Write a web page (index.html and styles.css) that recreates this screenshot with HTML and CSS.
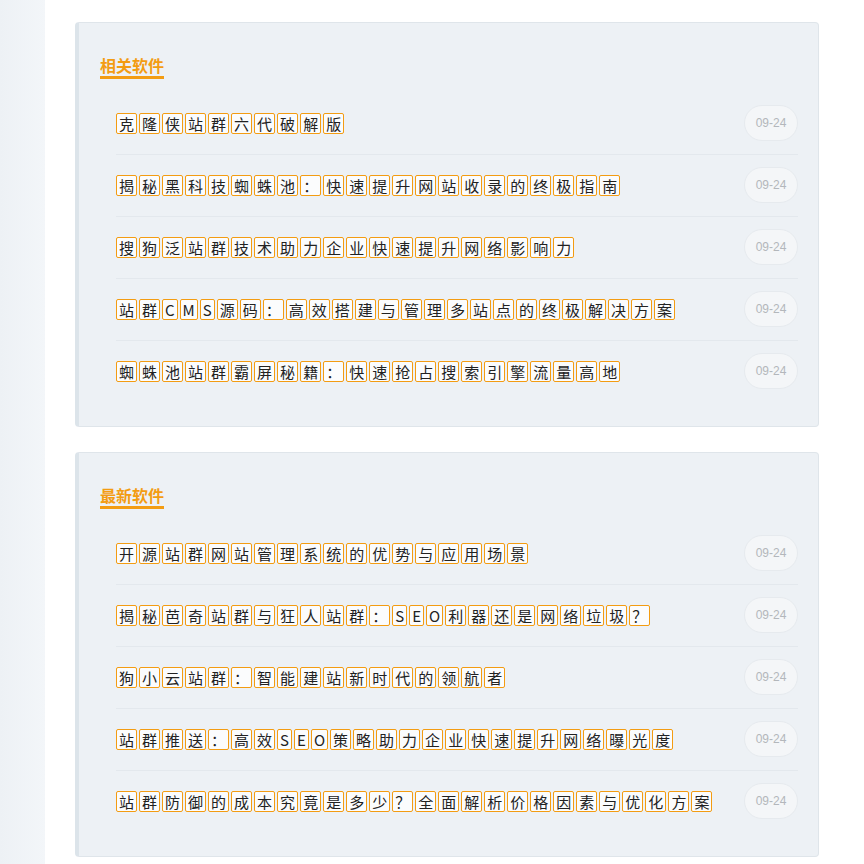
FILE: index.html
```html
<!DOCTYPE html>
<html lang="zh-CN">
<head>
    <meta charset="UTF-8">
    <title>软件列表</title>
    <link rel="stylesheet" href="styles.css">
</head>
<body>
    <div class="layout">
        <div class="sidebar"></div>
        <div class="main">
            <div class="card">
                <h3 class="card-title">相关软件</h3>
                <ul class="soft-list">
                    <li><a class="name" href="#">克隆侠站群六代破解版</a><span class="date">09-24</span></li>
                    <li><a class="name" href="#">揭秘黑科技蜘蛛池：快速提升网站收录的终极指南</a><span class="date">09-24</span></li>
                    <li><a class="name" href="#">搜狗泛站群技术助力企业快速提升网络影响力</a><span class="date">09-24</span></li>
                    <li><a class="name" href="#">站群CMS源码：高效搭建与管理多站点的终极解决方案</a><span class="date">09-24</span></li>
                    <li><a class="name" href="#">蜘蛛池站群霸屏秘籍：快速抢占搜索引擎流量高地</a><span class="date">09-24</span></li>
                </ul>
            </div>

            <div class="card">
                <h3 class="card-title">最新软件</h3>
                <ul class="soft-list">
                    <li><a class="name" href="#">开源站群网站管理系统的优势与应用场景</a><span class="date">09-24</span></li>
                    <li><a class="name" href="#">揭秘芭奇站群与狂人站群：SEO利器还是网络垃圾？</a><span class="date">09-24</span></li>
                    <li><a class="name" href="#">狗小云站群：智能建站新时代的领航者</a><span class="date">09-24</span></li>
                    <li><a class="name" href="#">站群推送：高效SEO策略助力企业快速提升网络曝光度</a><span class="date">09-24</span></li>
                    <li><a class="name" href="#">站群防御的成本究竟是多少？全面解析价格因素与优化方案</a><span class="date">09-24</span></li>
                </ul>
            </div>
        </div>
    </div>

    <script>
        // 每个字单独包一层
        document.querySelectorAll('.soft-list .name').forEach(function (link) {
            const text = link.textContent;
            link.innerHTML = '';
            Array.from(text).forEach(function (ch) {
                const span = document.createElement('span');
                span.className = 'ch';
                span.textContent = ch;
                link.appendChild(span);
            });
        });
    </script>
</body>
</html>
```

FILE: styles.css
```css
body {
    margin: 0;
    font-family: "Noto Sans CJK SC", "Noto Sans", sans-serif;
    background-color: #ffffff;
    color: #333;
}
.layout {
    display: flex;
    min-height: 864px;
}
.sidebar {
    width: 45px;
    flex-shrink: 0;
    background: linear-gradient(to right, #edf1f5, #f3f6f9);
}
.main {
    flex: 1;
    padding: 22px 45px 0 30px;
}
.card {
    background-color: #edf1f5;
    border: 1px solid #dfe5ea;
    border-left: 4px solid #dce4ea;
    border-radius: 4px;
    padding: 30px 20px 24px 21px;
    margin-bottom: 25px;
}
.card-title {
    display: inline-block;
    margin: 0;
    font-size: 16px;
    line-height: 22px;
    font-weight: bold;
    color: #f39c12;
    border-bottom: 3px solid #f39c12;
}
.soft-list {
    list-style: none;
    margin: 14px 0 0 16px;
    padding: 0;
}
.soft-list li {
    display: flex;
    align-items: center;
    justify-content: space-between;
    padding: 12px 0 13px;
    border-bottom: 1px solid #e3e8ed;
}
.soft-list li:last-child {
    border-bottom: none;
}
.name {
    text-decoration: none;
    color: #222;
    display: flex;
    flex-wrap: wrap;
    gap: 2px;
}
.ch {
    display: inline-block;
    font-size: 15px;
    line-height: 19px;
    padding: 0 2px;
    border: 1px solid #f39c12;
    border-radius: 2px;
    background-color: #fbfcfd;
}
.date {
    width: 52px;
    height: 34px;
    line-height: 34px;
    text-align: center;
    border: 1px solid #e6eaee;
    border-radius: 18px;
    background-color: #f4f6f8;
    color: #b3b7bb;
    font-family: "Liberation Sans", Arial, sans-serif;
    font-size: 12px;
}
```
